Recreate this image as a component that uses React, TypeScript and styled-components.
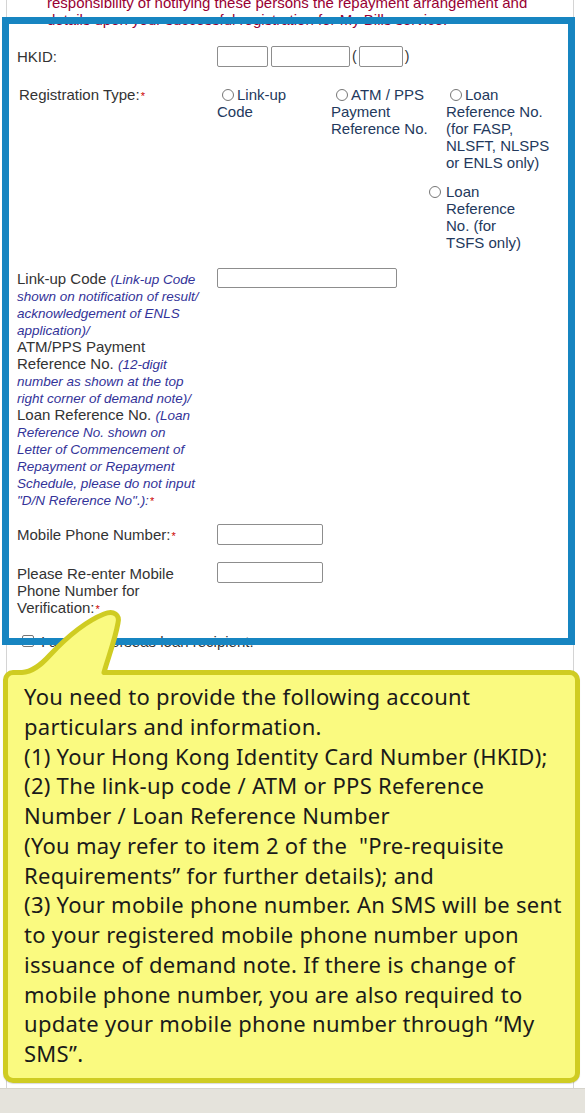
import React from "react";
import styled, { createGlobalStyle } from "styled-components";

const GlobalStyle = createGlobalStyle`
  html, body {
    margin: 0;
    padding: 0;
    background: #fff;
  }
  body {
    font-family: "Liberation Sans", Arial, sans-serif;
  }
`;

const Page = styled.div`
  position: relative;
  width: 585px;
  height: 1113px;
  overflow: hidden;
  background: #fff;
  display: flex;
  flex-direction: column;
`;

const Panel = styled.div`
  display: flex;
  flex-direction: column;
  margin-left: 6px;
  width: 568px;
  height: 1088px;
  flex-shrink: 0;
  box-sizing: border-box;
  border-left: 1px solid #d4d4d4;
  border-right: 1px solid #d4d4d4;
  padding-left: 10px;
  font-size: 15px;
  line-height: 17px;
  color: #333;
`;

const Notice = styled.p`
  margin: -6.5px 0 0 30px;
  color: #990033;
  white-space: nowrap;
`;

const FieldRow = styled.div<{ $top: number; $center?: boolean }>`
  display: grid;
  grid-template-columns: 200px 1fr;
  align-items: ${(p) => (p.$center ? "center" : "start")};
  margin-top: ${(p) => p.$top}px;
`;

const Label = styled.div<{ $pad?: number; $indent?: number }>`
  padding-top: ${(p) => p.$pad ?? 0}px;
  padding-left: ${(p) => p.$indent ?? 0}px;
  white-space: nowrap;
  color: #333;
`;

const Hint = styled.i`
  font-size: 13.5px;
  line-height: 13px;
  color: #333399;
`;

const Req = styled.span`
  color: #cc0000;
  font-size: 11px;
  line-height: 11px;
  margin-left: 1px;
`;

const HkidGroup = styled.div`
  display: flex;
  align-items: center;
  gap: 3px;
`;

const Box = styled.input<{ $w: number; $h?: number }>`
  box-sizing: border-box;
  width: ${(p) => p.$w}px;
  height: ${(p) => p.$h ?? 21}px;
  margin: 0;
  padding: 0 3px;
  border: 1px solid #8d8d8d;
  border-radius: 2px;
  background: #fff;
  font: inherit;
  outline: none;
  display: block;
`;

const Paren = styled.span`
  color: #333;
  font-size: 14px;
  margin: 0 -1px;
`;

const Options = styled.div`
  display: flex;
  flex-direction: column;
  gap: 12px;
`;

const OptionGrid = styled.div`
  display: grid;
  grid-template-columns: 114px 115px 1fr;
`;

const Option = styled.div<{ $indent: number }>`
  color: #23395d;
  white-space: nowrap;
  & > span:first-child {
    margin-left: ${(p) => p.$indent}px;
  }
`;

const Radio = styled.span`
  display: inline-block;
  box-sizing: border-box;
  width: 12px;
  height: 12px;
  margin-right: 3px;
  border: 1px solid #767676;
  border-radius: 50%;
  background: #fff;
  vertical-align: -1px;
  line-height: 0;
`;

const StackedOption = styled.div`
  display: flex;
  align-items: flex-start;
  margin-left: 212px;
  color: #23395d;
  white-space: nowrap;
  ${Radio} {
    margin: 3px 5px 0 0;
    flex-shrink: 0;
  }
`;

const CheckRow = styled.div<{ $top: number }>`
  display: flex;
  align-items: center;
  margin-top: ${(p) => p.$top}px;
  padding-left: 5px;
  color: #333;
`;

const Check = styled.span`
  display: inline-block;
  box-sizing: border-box;
  width: 12px;
  height: 12px;
  margin-right: 7px;
  border: 1px solid #767676;
  border-radius: 2px;
  background: #fff;
`;

const Highlight = styled.div`
  position: absolute;
  left: 2px;
  top: 17px;
  width: 573px;
  height: 628px;
  box-sizing: border-box;
  border: 7px solid #1785c1;
`;

const Callout = styled.div`
  position: absolute;
  left: 3px;
  top: 670px;
  width: 577px;
  height: 413px;
  box-sizing: border-box;
  padding: 7px 4px 0 16px;
  border: 5px solid #cfcc22;
  border-radius: 10px;
  background: #fafa80;
  box-shadow: 0 1px 1px rgba(0, 0, 0, 0.15);
  font-family: "Noto Sans", "Open Sans", sans-serif;
  font-size: 22px;
  line-height: 29.75px;
  letter-spacing: 0.28px;
  color: #1a1a1a;
`;

const Tail = styled.svg`
  position: absolute;
  left: 10px;
  top: -65px;
  overflow: visible;
`;

const CalloutLine = styled.span`
  display: block;
  white-space: pre;
`;

const Footer = styled.div`
  flex: 1;
  background: #e5e3dc;
  border-top: 1px solid #d6d4cc;
`;

const calloutLines = [
  "You need to provide the following account",
  "particulars and information.",
  "(1) Your Hong Kong Identity Card Number (HKID);",
  "(2) The link-up code / ATM or PPS Reference",
  "Number / Loan Reference Number",
  '(You may refer to item 2 of the  "Pre-requisite',
  "Requirements\u201D for further details); and",
  "(3) Your mobile phone number. An SMS will be sent",
  "to your registered mobile phone number upon",
  "issuance of demand note. If there is change of",
  "mobile phone number, you are also required to",
  "update your mobile phone number through \u201CMy",
  "SMS\u201D.",
];

const tailEdge =
  "M 4 62.5 C 14 62, 22 56, 32 45 C 48 28, 66 12, 86 4 C 96 0, 102 5, 100 13 C 97 30, 90 48, 86 62.5";

export default function App() {
  return (
    <>
      <GlobalStyle />
      <Page>
        <Panel>
          <Notice>
            responsibility of notifying these persons the repayment arrangement and
            <br />
            details upon your successful registration for My Bills service.
          </Notice>

          <FieldRow $top={18.5} $center>
            <Label>HKID:</Label>
            <HkidGroup>
              <Box $w={51} readOnly />
              <Box $w={79} readOnly />
              <Paren>(</Paren>
              <Box $w={44} readOnly />
              <Paren>)</Paren>
            </HkidGroup>
          </FieldRow>

          <FieldRow $top={18.5}>
            <Label $indent={2}>
              Registration Type:<Req>*</Req>
            </Label>
            <Options>
              <OptionGrid>
                <Option $indent={5}>
                  <Radio />
                  Link-up
                  <br />
                  Code
                </Option>
                <Option $indent={5}>
                  <Radio />
                  ATM / PPS
                  <br />
                  Payment
                  <br />
                  Reference No.
                </Option>
                <Option $indent={4}>
                  <Radio />
                  Loan
                  <br />
                  Reference No.
                  <br />
                  (for FASP,
                  <br />
                  NLSFT, NLSPS
                  <br />
                  or ENLS only)
                </Option>
              </OptionGrid>
              <StackedOption>
                <Radio />
                <span>
                  Loan
                  <br />
                  Reference
                  <br />
                  No. (for
                  <br />
                  TSFS only)
                </span>
              </StackedOption>
            </Options>
          </FieldRow>

          <FieldRow $top={17.5}>
            <Label $pad={1.5}>
              Link-up Code <Hint>(Link-up Code</Hint>
              <br />
              <Hint>shown on notification of result/</Hint>
              <br />
              <Hint>acknowledgement of ENLS</Hint>
              <br />
              <Hint>application)/</Hint>
              <br />
              ATM/PPS Payment
              <br />
              Reference No. <Hint>(12-digit</Hint>
              <br />
              <Hint>number as shown at the top</Hint>
              <br />
              <Hint>right corner of demand note)/</Hint>
              <br />
              Loan Reference No. <Hint>(Loan</Hint>
              <br />
              <Hint>Reference No. shown on</Hint>
              <br />
              <Hint>Letter of Commencement of</Hint>
              <br />
              <Hint>Repayment or Repayment</Hint>
              <br />
              <Hint>Schedule, please do not input</Hint>
              <br />
              <Hint>"D/N Reference No".):</Hint>
              <Req>*</Req>
            </Label>
            <div>
              <Box $w={180} $h={20} readOnly />
            </div>
          </FieldRow>

          <FieldRow $top={16.5} $center>
            <Label>
              Mobile Phone Number:<Req>*</Req>
            </Label>
            <div>
              <Box $w={106} readOnly />
            </div>
          </FieldRow>

          <FieldRow $top={17}>
            <Label $pad={2.5}>
              Please Re-enter Mobile
              <br />
              Phone Number for
              <br />
              Verification:<Req>*</Req>
            </Label>
            <div>
              <Box $w={106} readOnly />
            </div>
          </FieldRow>

          <CheckRow $top={17}>
            <Check />I am an overseas loan recipient.
          </CheckRow>
        </Panel>
        <Footer />

        <Highlight />

        <Callout>
          <Tail width="110" height="72" viewBox="0 0 110 72">
            <path d={`${tailEdge} L 86 70 L 4 70 Z`} fill="#fafa80" />
            <path
              d={tailEdge}
              fill="none"
              stroke="#cfcc22"
              strokeWidth="5"
              strokeLinejoin="round"
              strokeLinecap="round"
            />
          </Tail>
          {calloutLines.map((line, i) => (
            <CalloutLine key={i}>{line}</CalloutLine>
          ))}
        </Callout>
      </Page>
    </>
  );
}
